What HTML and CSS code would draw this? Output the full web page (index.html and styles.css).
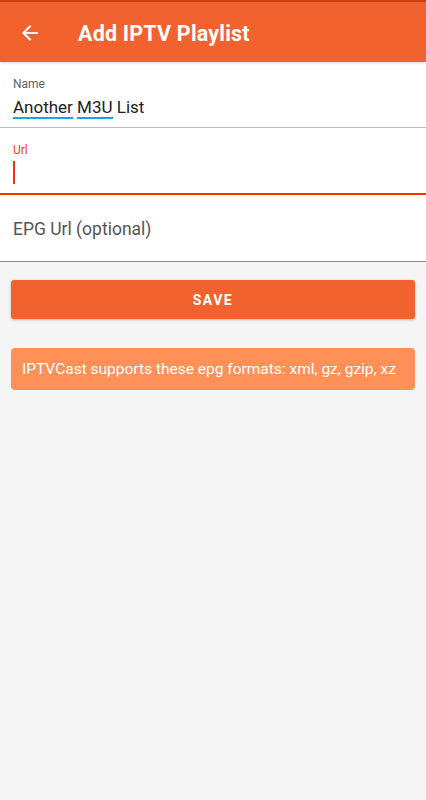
FILE: index.html
```html
<!DOCTYPE html>
<html lang="en">
<head>
  <meta charset="UTF-8" />
  <meta name="viewport" content="width=device-width, initial-scale=1.0" />
  <title>Add IPTV Playlist</title>
  <link rel="stylesheet" href="styles.css">
</head>
<body>
  <!-- Barre du haut -->
  <header class="toolbar">
    <button class="back-btn" aria-label="Back">
      <svg width="24" height="24" viewBox="0 0 24 24">
        <path d="M20 11H7.83l5.59-5.59L12 4l-8 8 8 8 1.41-1.41L7.83 13H20v-2z" fill="#fff"/>
      </svg>
    </button>
    <h1>Add IPTV Playlist</h1>
  </header>

  <!-- Champs -->
  <div class="field">
    <label>Name</label>
    <div class="value"><span class="spell">Another</span> <span class="spell">M3U</span> List</div>
  </div>
  <div class="field focused">
    <label>Url</label>
    <div class="value"><span class="caret"></span></div>
  </div>
  <div class="field empty">
    <div class="placeholder">EPG Url (optional)</div>
  </div>

  <div class="content">
    <button class="save-btn">SAVE</button>
    <div class="info">IPTVCast supports these epg formats: xml, gz, gzip, xz</div>
  </div>
</body>
</html>
```

FILE: styles.css
```css
/* ===============================
   BASE
   =============================== */
* {
  margin: 0;
  padding: 0;
  box-sizing: border-box;
}
body {
  font-family: Roboto, "Noto Sans", sans-serif;
  background: #f5f5f5;
  color: #212121;
  width: 426px;
  min-height: 800px;
}

/* ===============================
   TOOLBAR
   =============================== */
.toolbar {
  position: relative;
  height: 62px;
  background: #f2622e;
  border-top: 2px solid #c8400f;
  display: flex;
  align-items: center;
  padding-left: 18px;
  padding-top: 2px;
  box-shadow: 0 1px 3px rgba(0, 0, 0, 0.15);
}
.back-btn {
  background: transparent;
  border: none;
  width: 24px;
  height: 24px;
  display: flex;
}
.toolbar h1 {
  font-size: 21.5px;
  font-weight: 700;
  color: #fff;
  margin-left: 36px;
  letter-spacing: 0.2px;
}

/* ===============================
   CHAMPS
   =============================== */
.field {
  background: #fff;
  height: 66px;
  padding: 15px 13px 0;
  border-bottom: 1px solid #bdbdbd;
}
.field label {
  display: block;
  font-size: 12px;
  color: #616161;
  line-height: 14px;
}
.field .value {
  font-size: 17px;
  line-height: 24px;
  margin-top: 4px;
  color: #212121;
}
.spell {
  border-bottom: 2px solid #13a9e0;
}
.field.focused {
  border-bottom: 2px solid #f2360a;
  height: 67px;
  padding-top: 15px;
}
.field.focused label {
  color: #f3400f;
}
.caret {
  display: block;
  width: 2px;
  height: 23px;
  background: #f2360a;
  margin-top: 2px;
}
.field.empty {
  height: 67px;
  padding-top: 23px;
  border-bottom: 1px solid #8a8a8a;
}
.placeholder {
  font-size: 17.5px;
  line-height: 22px;
  color: #555;
}

/* ===============================
   CONTENU
   =============================== */
.content {
  padding: 18px 11px;
  display: flex;
  flex-direction: column;
  gap: 29px;
}
.save-btn {
  height: 39px;
  border: none;
  border-radius: 3px;
  background: #f2622e;
  color: #fff;
  font-family: Roboto, sans-serif;
  font-size: 14px;
  font-weight: 700;
  letter-spacing: 1.5px;
  box-shadow: 0 1px 3px rgba(0, 0, 0, 0.25);
}
.info {
  height: 42px;
  background: #ff9057;
  border-radius: 4px;
  color: #fff;
  font-size: 15.5px;
  display: flex;
  align-items: center;
  padding-left: 11px;
}
```
